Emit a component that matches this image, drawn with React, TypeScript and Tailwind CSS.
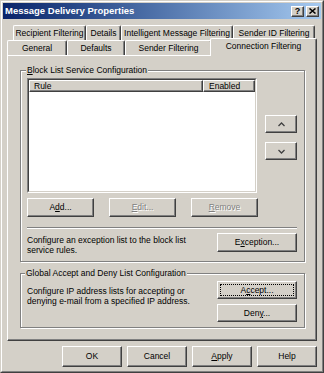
import React from "react";

const raised =
  "border border-t-white border-l-white border-r-[#404040] border-b-[#404040] shadow-[inset_-1px_-1px_0_#808080] bg-[#d4d0c8]";

interface BtnProps {
  className: string;
  disabled?: boolean;
  focused?: boolean;
  children: React.ReactNode;
}

const Btn: React.FC<BtnProps> = ({ className, disabled, focused, children }) => (
  <div className={`relative flex items-center justify-center whitespace-nowrap ${raised} ${className}`}>
    <span className={disabled ? "text-[#808080] [text-shadow:1px_1px_0_#fff]" : ""}>{children}</span>
    {focused && <div className="absolute inset-[2px] border border-dotted border-black" />}
  </div>
);

const U: React.FC<{ children: React.ReactNode }> = ({ children }) => (
  <span className="underline underline-offset-[1px]">{children}</span>
);

const tab =
  "h-full flex items-center justify-center whitespace-nowrap border-t border-l border-r border-t-white border-l-white border-r-[#404040] shadow-[inset_-1px_0_0_#808080] rounded-t-[2px] bg-[#d4d0c8]";

const group =
  "relative border border-[#808080] shadow-[1px_1px_0_#fff,inset_1px_1px_0_#fff]";

const Chevron: React.FC<{ up?: boolean }> = ({ up }) => (
  <svg width="7" height="5" viewBox="0 0 7 5">
    <polyline
      points={up ? "0.5,4 3.5,1 6.5,4" : "0.5,1 3.5,4 6.5,1"}
      fill="none"
      stroke="#404040"
      strokeWidth="1.3"
    />
  </svg>
);

export default function App() {
  return (
    <div className="w-[324px] h-[373px] bg-[#d4d0c8] [font-family:'Liberation_Sans',Arial,sans-serif] text-[8.5px] leading-none text-black">
      <div className="w-full h-full border border-t-[#d4d0c8] border-l-[#d4d0c8] border-r-[#404040] border-b-[#404040]">
        <div className="w-full h-full border border-t-white border-l-white border-r-[#808080] border-b-[#808080] p-[1px]">
          {/* title bar */}
          <div className="h-[16px] flex items-center justify-between pl-[2px] pr-[2px] bg-linear-to-r from-[#0a246a] to-[#a6caf0]">
            <span className="text-white font-bold text-[9.5px]">Message Delivery Properties</span>
            <div className="flex gap-[2px]">
              <div className={`w-[13px] h-[11px] flex items-center justify-center font-bold text-[9px] ${raised}`}>?</div>
              <div className={`w-[13px] h-[11px] flex items-center justify-center ${raised}`}>
                <svg width="7" height="6" viewBox="0 0 7 6">
                  <path d="M0.5 0.5 L6.5 5.5 M6.5 0.5 L0.5 5.5" stroke="#000" strokeWidth="1.5" />
                </svg>
              </div>
            </div>
          </div>

          {/* tabs */}
          <div className="mt-[6px] h-[15px] pl-[10px] flex">
            <div className={`${tab} w-[73px]`}>Recipient Filtering</div>
            <div className={`${tab} w-[35px]`}>Details</div>
            <div className={`${tab} w-[112px]`}>Intelligent Message Filtering</div>
            <div className={`${tab} w-[82px]`}>Sender ID Filtering</div>
          </div>
          <div className="h-[15px] pl-[4px] flex">
            <div className={`${tab} w-[60px]`}>General</div>
            <div className={`${tab} w-[58px]`}>Defaults</div>
            <div className={`${tab} w-[87px]`}>Sender Filtering</div>
            <div className={`${tab} relative z-10 -top-[2px] -ml-[2px] w-[107px] !h-[18px] pb-[2px]`}>
              Connection Filtering
            </div>
          </div>

          {/* panel */}
          <div className="ml-[4px] w-[310px] h-[286px] border border-t-white border-l-white border-r-[#404040] border-b-[#404040] shadow-[inset_-1px_-1px_0_#808080]">
            <div className={`${group} ml-[12px] mt-[14px] w-[285px] h-[192px]`}>
              <span className="absolute left-[5px] -top-[5px] px-[1px] bg-[#d4d0c8]">
                <U>B</U>lock List Service Configuration
              </span>
              <div className="flex items-start">
                <div className="ml-[6px] mt-[7px] w-[230px] h-[115px] border border-t-[#808080] border-l-[#808080] border-r-white border-b-white">
                  <div className="w-full h-full border border-t-[#404040] border-l-[#404040] border-r-[#d4d0c8] border-b-[#d4d0c8] bg-white">
                    <div className="flex h-[12px]">
                      <div className={`${raised} w-[174px] flex items-center pl-[4px]`}>Rule</div>
                      <div className={`${raised} flex-1 flex items-center pl-[5px]`}>Enabled</div>
                    </div>
                  </div>
                </div>
                <div className="ml-[8px] mt-[44px] flex flex-col gap-[9px]">
                  <Btn className="w-[32px] h-[18px]">
                    <Chevron up />
                  </Btn>
                  <Btn className="w-[32px] h-[18px]">
                    <Chevron />
                  </Btn>
                </div>
              </div>
              <div className="mt-[5px] ml-[6px] flex gap-[15px]">
                <Btn className="w-[67px] h-[19px]">
                  A<U>d</U>d...
                </Btn>
                <Btn className="w-[67px] h-[19px]" disabled>
                  <U>E</U>dit...
                </Btn>
                <Btn className="w-[67px] h-[19px]" disabled>
                  <U>R</U>emove
                </Btn>
              </div>
              <div className="mt-[10px] ml-[6px] w-[270px] h-[2px] border-t border-t-[#808080] border-b border-b-white" />
              <div className="mt-[4px] ml-[6px] flex items-start">
                <div className="w-[190px] pt-[2px] leading-[10px]">
                  Configure an exception list to the block list
                  <br />
                  service rules.
                </div>
                <Btn className="w-[80px] h-[19px]">
                  E<U>x</U>ception...
                </Btn>
              </div>
            </div>

            <div className={`${group} ml-[12px] mt-[11px] w-[285px] h-[55px] flex items-start`}>
              <span className="absolute left-[4px] -top-[5px] px-[1px] bg-[#d4d0c8]">
                Global Accept and Deny List Configuration
              </span>
              <div className="ml-[6px] mt-[12px] w-[190px] leading-[10px]">
                Configure IP address lists for accepting or
                <br />
                denying e-mail from a specified IP address.
              </div>
              <div className="mt-[7px] flex flex-col gap-[5px]">
                <Btn className="w-[80px] h-[18px]" focused>
                  A<U>c</U>cept...
                </Btn>
                <Btn className="w-[80px] h-[18px]">
                  Den<U>y</U>...
                </Btn>
              </div>
            </div>
          </div>

          {/* dialog buttons */}
          <div className="mt-[5px] flex justify-end gap-[5px] pr-[4px]">
            <Btn className="w-[60px] h-[21px]">OK</Btn>
            <Btn className="w-[60px] h-[21px]">Cancel</Btn>
            <Btn className="w-[60px] h-[21px]">
              <U>A</U>pply
            </Btn>
            <Btn className="w-[60px] h-[21px]">Help</Btn>
          </div>
        </div>
      </div>
    </div>
  );
}
